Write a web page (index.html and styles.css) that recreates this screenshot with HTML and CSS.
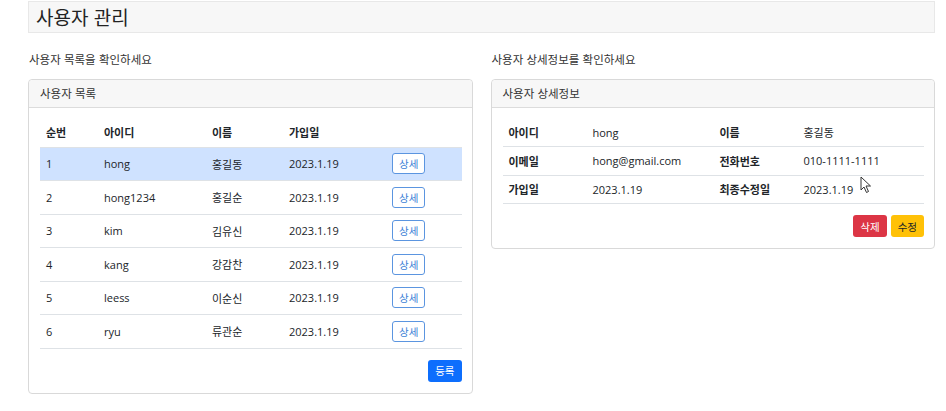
FILE: index.html
```html
<!DOCTYPE html>
<html lang="ko">
<head>
    <meta charset="UTF-8" />
    <meta name="viewport" content="width=device-width, initial-scale=1.0"/>
    <title>사용자 관리</title>
    <link rel="stylesheet" href="styles.css">
</head>
<body>
    <div class="page">
        <h1 class="page-title">사용자 관리</h1>

        <div class="columns">
            <section class="col">
                <p class="guide">사용자 목록을 확인하세요</p>
                <div class="card">
                    <div class="card-header">사용자 목록</div>
                    <div class="card-body">
                        <table class="list-table">
                            <colgroup>
                                <col style="width: 58px">
                                <col style="width: 108px">
                                <col style="width: 77px">
                                <col style="width: 103px">
                                <col>
                            </colgroup>
                            <thead>
                                <tr><th>순번</th><th>아이디</th><th>이름</th><th>가입일</th><th></th></tr>
                            </thead>
                            <tbody>
                                <tr class="active">
                                    <td>1</td><td>hong</td><td>홍길동</td><td>2023.1.19</td>
                                    <td><button class="btn btn-outline">상세</button></td>
                                </tr>
                                <tr>
                                    <td>2</td><td>hong1234</td><td>홍길순</td><td>2023.1.19</td>
                                    <td><button class="btn btn-outline">상세</button></td>
                                </tr>
                                <tr>
                                    <td>3</td><td>kim</td><td>김유신</td><td>2023.1.19</td>
                                    <td><button class="btn btn-outline">상세</button></td>
                                </tr>
                                <tr>
                                    <td>4</td><td>kang</td><td>강감찬</td><td>2023.1.19</td>
                                    <td><button class="btn btn-outline">상세</button></td>
                                </tr>
                                <tr>
                                    <td>5</td><td>leess</td><td>이순신</td><td>2023.1.19</td>
                                    <td><button class="btn btn-outline">상세</button></td>
                                </tr>
                                <tr>
                                    <td>6</td><td>ryu</td><td>류관순</td><td>2023.1.19</td>
                                    <td><button class="btn btn-outline">상세</button></td>
                                </tr>
                            </tbody>
                        </table>
                        <div class="actions">
                            <button class="btn btn-primary">등록</button>
                        </div>
                    </div>
                </div>
            </section>

            <section class="col">
                <p class="guide">사용자 상세정보를 확인하세요</p>
                <div class="card">
                    <div class="card-header">사용자 상세정보</div>
                    <div class="card-body">
                        <table class="detail-table">
                            <colgroup>
                                <col style="width: 84px">
                                <col style="width: 127px">
                                <col style="width: 84px">
                                <col>
                            </colgroup>
                            <tr><th>아이디</th><td>hong</td><th>이름</th><td>홍길동</td></tr>
                            <tr><th>이메일</th><td>hong@gmail.com</td><th>전화번호</th><td>010-1111-1111</td></tr>
                            <tr><th>가입일</th><td>2023.1.19</td><th>최종수정일</th><td>2023.1.19</td></tr>
                        </table>
                        <div class="actions">
                            <button class="btn btn-danger">삭제</button>
                            <button class="btn btn-warning">수정</button>
                        </div>
                    </div>
                </div>
            </section>
        </div>
    </div>

    <svg class="cursor" width="12" height="18" viewBox="0 0 12 18">
        <path d="M1 1 L1 14 L4 11 L6.5 16.5 L8.5 15.5 L6 10 L10.5 10 Z" fill="#fff" stroke="#333" stroke-width="1"/>
    </svg>
</body>
</html>
```

FILE: styles.css
```css
body {
    margin: 0;
    font-family: "Open Sans", "Noto Sans CJK KR", sans-serif;
    font-size: 11px;
    color: #212529;
    background-color: #fff;
}
.page {
    padding: 1px 11px 0 28px;
}
.page-title {
    margin: 0;
    height: 30px;
    line-height: 29px;
    padding-left: 7px;
    font-family: "Noto Sans CJK KR", sans-serif;
    font-size: 19px;
    font-weight: 400;
    color: #222;
    background-color: #f7f7f7;
    border: 1px solid #e8e8e8;
}
.columns {
    display: flex;
    gap: 18px;
}
.col {
    flex: 1;
}
.guide {
    margin: 18px 0 12px 1px;
    height: 16px;
    line-height: 16px;
    font-family: "Noto Sans CJK KR", sans-serif;
    font-size: 11.5px;
    color: #333;
}
.card {
    border: 1px solid #d9d9d9;
    border-radius: 4px;
    background-color: #fff;
}
.card-header {
    height: 27px;
    line-height: 27px;
    padding-left: 11px;
    background-color: #f7f7f7;
    border-bottom: 1px solid #dcdcdc;
    border-radius: 4px 4px 0 0;
    font-family: "Noto Sans CJK KR", sans-serif;
    font-size: 11.5px;
    color: #333;
}
.card-body {
    padding: 10px 10px 11px 11px;
}
table {
    width: 100%;
    border-collapse: collapse;
    table-layout: fixed;
}
th, td {
    text-align: left;
    padding: 0 6px;
    white-space: nowrap;
    vertical-align: middle;
}
th {
    font-weight: 700;
}
.list-table thead tr {
    height: 29px;
}
.list-table tbody tr {
    height: 33.5px;
    border-top: 1px solid #dee2e6;
}
.list-table tbody tr:last-child {
    border-bottom: 1px solid #dee2e6;
}
.list-table tr.active td {
    background-color: #cfe2ff;
}
.detail-table tr {
    height: 28.5px;
    border-bottom: 1px solid #dee2e6;
}
.actions {
    display: flex;
    justify-content: flex-end;
    gap: 4px;
    margin-top: 11px;
}
.btn {
    font-family: "Noto Sans CJK KR", sans-serif;
    font-size: 10.5px;
    height: 22px;
    padding: 0 6px;
    border-radius: 3px;
    border: 1px solid transparent;
    cursor: pointer;
}
.btn-outline {
    height: 21px;
    padding: 0 6px;
    color: #3d7fd6;
    background-color: #fff;
    border-color: #5b95e0;
}
.btn-primary {
    color: #fff;
    background-color: #0d6efd;
}
.btn-danger {
    color: #fff;
    background-color: #dc3545;
}
.btn-warning {
    color: #212529;
    background-color: #ffc107;
}
.cursor {
    position: absolute;
    left: 860px;
    top: 176px;
}
```
